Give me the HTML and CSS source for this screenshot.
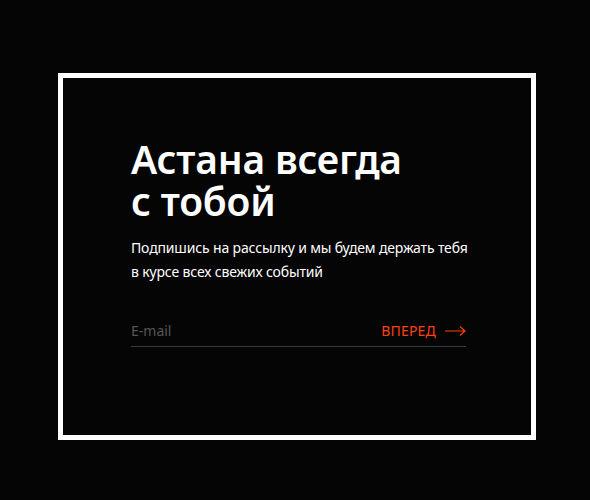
FILE: index.html
```html
<!DOCTYPE html>
<html lang="ru">
<head>
<meta charset="utf-8">
<link rel="stylesheet" href="styles.css">
</head>
<body>
<div class="frame">
  <div class="content">
    <h1 class="title">Астана всегда<br>с тобой</h1>
    <p class="lead">Подпишись на рассылку и мы будем держать тебя<br>в курсе всех свежих событий</p>
    <form class="form">
      <span class="placeholder">E-mail</span>
      <span class="submit">ВПЕРЕД
        <svg class="arrow" width="21" height="10" viewBox="0 0 21 10"><path d="M0 5H20M15 0.5L20 5L15 9.5" fill="none" stroke="#ff4010" stroke-width="1.2"/></svg>
      </span>
    </form>
  </div>
</div>
</body>
</html>
```
FILE: styles.css
```css
html, body {
  margin: 0;
  padding: 0;
  background: #050505;
}
body {
  width: 590px;
  height: 500px;
  padding-top: 73px;
  padding-left: 58px;
  box-sizing: border-box;
  font-family: "Noto Sans", "Open Sans", sans-serif;
}
.frame {
  width: 478px;
  height: 367px;
  border: 5px solid #fff;
  box-sizing: border-box;
  padding: 60px 0 0 68px;
}
.content {
  width: 335px;
}
.title {
  margin: 0;
  color: #fff;
  font-size: 39px;
  font-weight: 600;
  line-height: 42px;
  letter-spacing: -0.2px;
}
.lead {
  margin: 14px 0 0;
  color: #fff;
  font-size: 14px;
  line-height: 24px;
  letter-spacing: -0.15px;
  white-space: nowrap;
}
.form {
  margin-top: 37px;
  display: flex;
  justify-content: space-between;
  align-items: center;
  padding-bottom: 6px;
  border-bottom: 1px solid #3a3a3a;
}
.placeholder {
  color: #555;
  font-size: 14px;
}
.submit {
  display: flex;
  align-items: center;
  gap: 9px;
  color: #ff4010;
  font-size: 14px;
  letter-spacing: 0.2px;
}
.arrow {
  display: block;
}
```
